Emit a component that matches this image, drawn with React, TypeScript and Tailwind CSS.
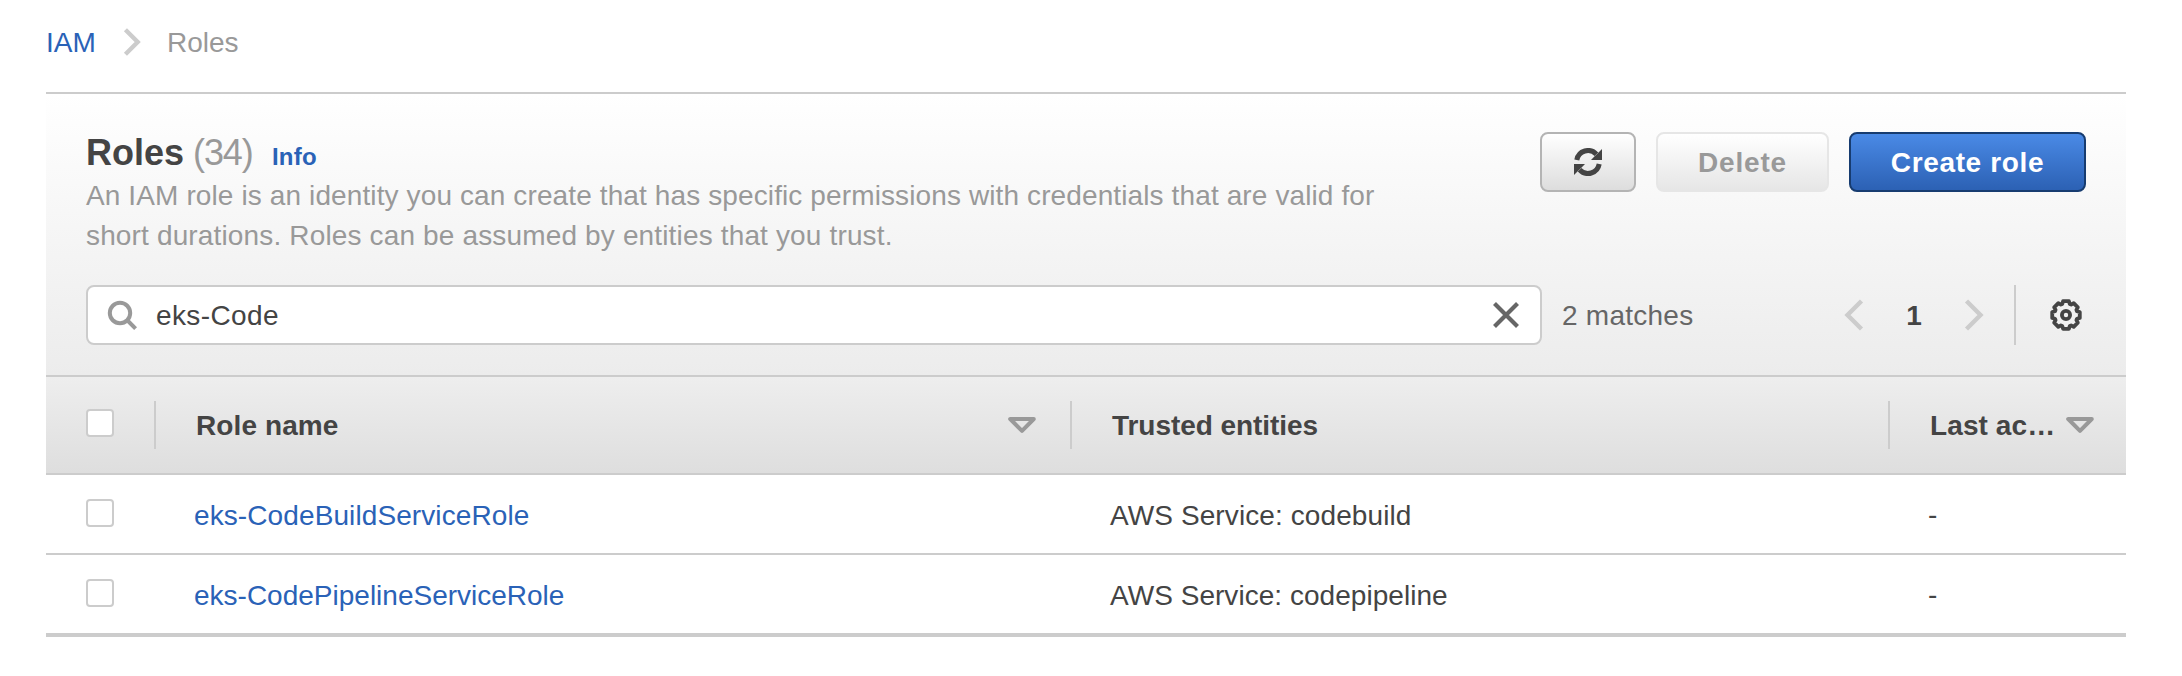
import React from "react";

const roles = [
  { name: "eks-CodeBuildServiceRole", entity: "AWS Service: codebuild", last: "-", nameClass: "tracking-[0.1px]", entityClass: "tracking-[0.1px]" },
  { name: "eks-CodePipelineServiceRole", entity: "AWS Service: codepipeline", last: "-", nameClass: "tracking-normal", entityClass: "tracking-[0.04px]" },
];

const gearPoints = Array.from({ length: 8 }, (_, i) => {
  const base = (i * Math.PI) / 4;
  return [
    [11.6, -0.33],
    [14.1, -0.21],
    [14.1, 0.21],
    [11.6, 0.33],
  ]
    .map(([r, a]) => `${(16 + r * Math.cos(base + a)).toFixed(2)},${(16 + r * Math.sin(base + a)).toFixed(2)}`)
    .join(" ");
}).join(" ");

function Chevron({ left = false, className = "h-[32px] w-[20px]", weight = 4.4 }: { left?: boolean; className?: string; weight?: number }) {
  return (
    <svg viewBox="0 0 20 32" className={className} fill="none" stroke="#ccc" strokeWidth={weight}>
      <path d={left ? "M17.5 2 L3.5 16 L17.5 30" : "M2.5 2 L16.5 16 L2.5 30"} />
    </svg>
  );
}

function RefreshIcon() {
  return (
    <svg viewBox="0 0 28 28" className="h-[28px] w-[28px]">
      <g id="arrow">
        <path d="M2.8 12 A11.4 11.4 0 0 1 22.4 6.2" fill="none" stroke="#444" strokeWidth="5" />
        <path d="M28 1 V12 H17 L20.4 8.4 L24 5 Z" fill="#444" />
      </g>
      <use href="#arrow" transform="rotate(180 14 14)" />
    </svg>
  );
}

function GearIcon() {
  return (
    <svg viewBox="0 0 32 32" className="h-[32px] w-[32px]" fill="none" stroke="#444" strokeWidth="3.8">
      <polygon points={gearPoints} strokeLinejoin="round" />
      <circle cx="16" cy="16" r="4.1" strokeWidth="3.8" />
    </svg>
  );
}

function SortIcon() {
  return (
    <svg viewBox="0 0 28 16" className="h-[16px] w-[28px] shrink-0" fill="none" stroke="#999" strokeWidth="4" strokeLinejoin="round">
      <path d="M2.2 2 H25.8 L14 13.8 Z" />
    </svg>
  );
}

function Checkbox() {
  return <div className="h-[28px] w-[28px] shrink-0 rounded-[4px] border-2 border-[#ccc] bg-white" />;
}

export default function App() {
  return (
    <div className="h-[676px] w-[2182px] overflow-hidden bg-white pr-[56px] pl-[46px] font-['Liberation_Sans',Arial,sans-serif] text-[28px] leading-[40px] text-[#444]">
      <nav className="flex h-[92px] pt-[23px]">
        <a className="w-[77px] text-[#2a62b7]">IAM</a>
        <Chevron className="mt-[5px] h-[28px] w-[18px]" weight={5} />
        <span className="ml-[26px] text-[#999]">Roles</span>
      </nav>

      <header className="h-[285px] border-y-2 border-[#ccc] bg-linear-to-b from-white to-[#ececec] px-[40px]">
        <div className="flex h-[191px] justify-between">
          <div className="pt-[37px]">
            <h1 className="flex h-[45px] items-baseline text-[36px] leading-[44px]">
              <b className="w-[107px]">Roles</b>
              <span className="w-[79px] tracking-[-1.1px] text-[#999]">(34)</span>
              <a className="text-[24px] font-bold tracking-[0.2px] text-[#2a62b7]">Info</a>
            </h1>
            <p className="text-[#999]">
              <span className="block tracking-[0.115px] whitespace-nowrap">
                An IAM role is an identity you can create that has specific permissions with credentials that are valid for
              </span>
              <span className="block tracking-[0.15px] whitespace-nowrap">
                short durations. Roles can be assumed by entities that you trust.
              </span>
            </p>
          </div>
          <div className="flex gap-[20px] pt-[38px] font-bold">
            <button className="flex h-[60px] w-[96px] items-center justify-center rounded-[8px] border-2 border-[#b4b4b4] bg-linear-to-b from-white to-[#ddd]">
              <RefreshIcon />
            </button>
            <button className="h-[60px] w-[173px] rounded-[8px] border-2 border-[#e6e6e6] bg-linear-to-b from-white to-[#e6e6e6] pt-[2px] tracking-[0.8px] text-[#999]">
              Delete
            </button>
            <button className="h-[60px] w-[237px] rounded-[8px] border-2 border-[#173c70] bg-linear-to-b from-[#4a8ae6] to-[#2c61b4] pt-[2px] tracking-[0.65px] text-white">
              Create role
            </button>
          </div>
        </div>
        <div className="flex h-[60px] items-center">
          <div className="flex h-[60px] w-[1456px] items-center rounded-[8px] border-2 border-[#ccc] bg-white pl-[19px]">
            <svg viewBox="0 0 30 30" className="h-[30px] w-[30px]" fill="none" stroke="#999" strokeWidth="4">
              <circle cx="13" cy="13" r="10.2" />
              <path d="M20 20 L28.6 28.6" />
            </svg>
            <span className="mt-[2px] ml-[19px] flex-1 tracking-[0.38px]">eks-Code</span>
            <svg viewBox="0 0 26 26" className="mr-[21px] h-[26px] w-[26px]" fill="none" stroke="#666" strokeWidth="4.2">
              <path d="M1.5 1.5 L24.5 24.5 M24.5 1.5 L1.5 24.5" />
            </svg>
          </div>
          <span className="mt-[2px] ml-[20px] tracking-[0.25px] text-[#666]">2 matches</span>
          <div className="ml-auto flex h-[60px] items-center">
            <Chevron left />
            <b className="mt-[2px] w-[100px] text-center">1</b>
            <Chevron />
            <div className="ml-[30px] h-[60px] w-[2px] bg-[#ccc]" />
            <div className="mr-[4px] ml-[34px]">
              <GearIcon />
            </div>
          </div>
        </div>
      </header>

      <div className="flex h-[98px] items-center border-b-2 border-[#ccc] bg-linear-to-b from-[#eee] to-[#dedede] pl-[40px] font-bold">
        <div className="mb-[4px] w-[68px]">
          <Checkbox />
        </div>
        <div className="flex h-[48px] w-[916px] items-center border-l-2 border-[#ccc] pr-[34px] pl-[40px]">
          <span className="mt-[2px] flex-1 tracking-[0.1px]">Role name</span>
          <SortIcon />
        </div>
        <div className="flex h-[48px] w-[818px] items-center border-l-2 border-[#ccc] pl-[40px]">
          <span className="mt-[2px] tracking-[-0.05px]">Trusted entities</span>
        </div>
        <div className="flex h-[48px] flex-1 items-center border-l-2 border-[#ccc] pr-[32px] pl-[40px]">
          <span className="mt-[2px] flex-1 tracking-[0.1px] whitespace-nowrap">Last ac…</span>
          <SortIcon />
        </div>
      </div>

      {roles.map((role, i) => (
        <div key={role.name} className={i === 0 ? "flex h-[80px] border-b-2 border-[#ccc] pl-[40px]" : "flex h-[82px] border-b-4 border-[#ccc] pl-[40px]"}>
          <div className="w-[108px] pt-[24px]">
            <Checkbox />
          </div>
          <a className={`w-[916px] pt-[21px] text-[#2a62b7] ${role.nameClass}`}>{role.name}</a>
          <span className={`w-[818px] pt-[21px] ${role.entityClass}`}>{role.entity}</span>
          <span className="pt-[20px]">{role.last}</span>
        </div>
      ))}
    </div>
  );
}
